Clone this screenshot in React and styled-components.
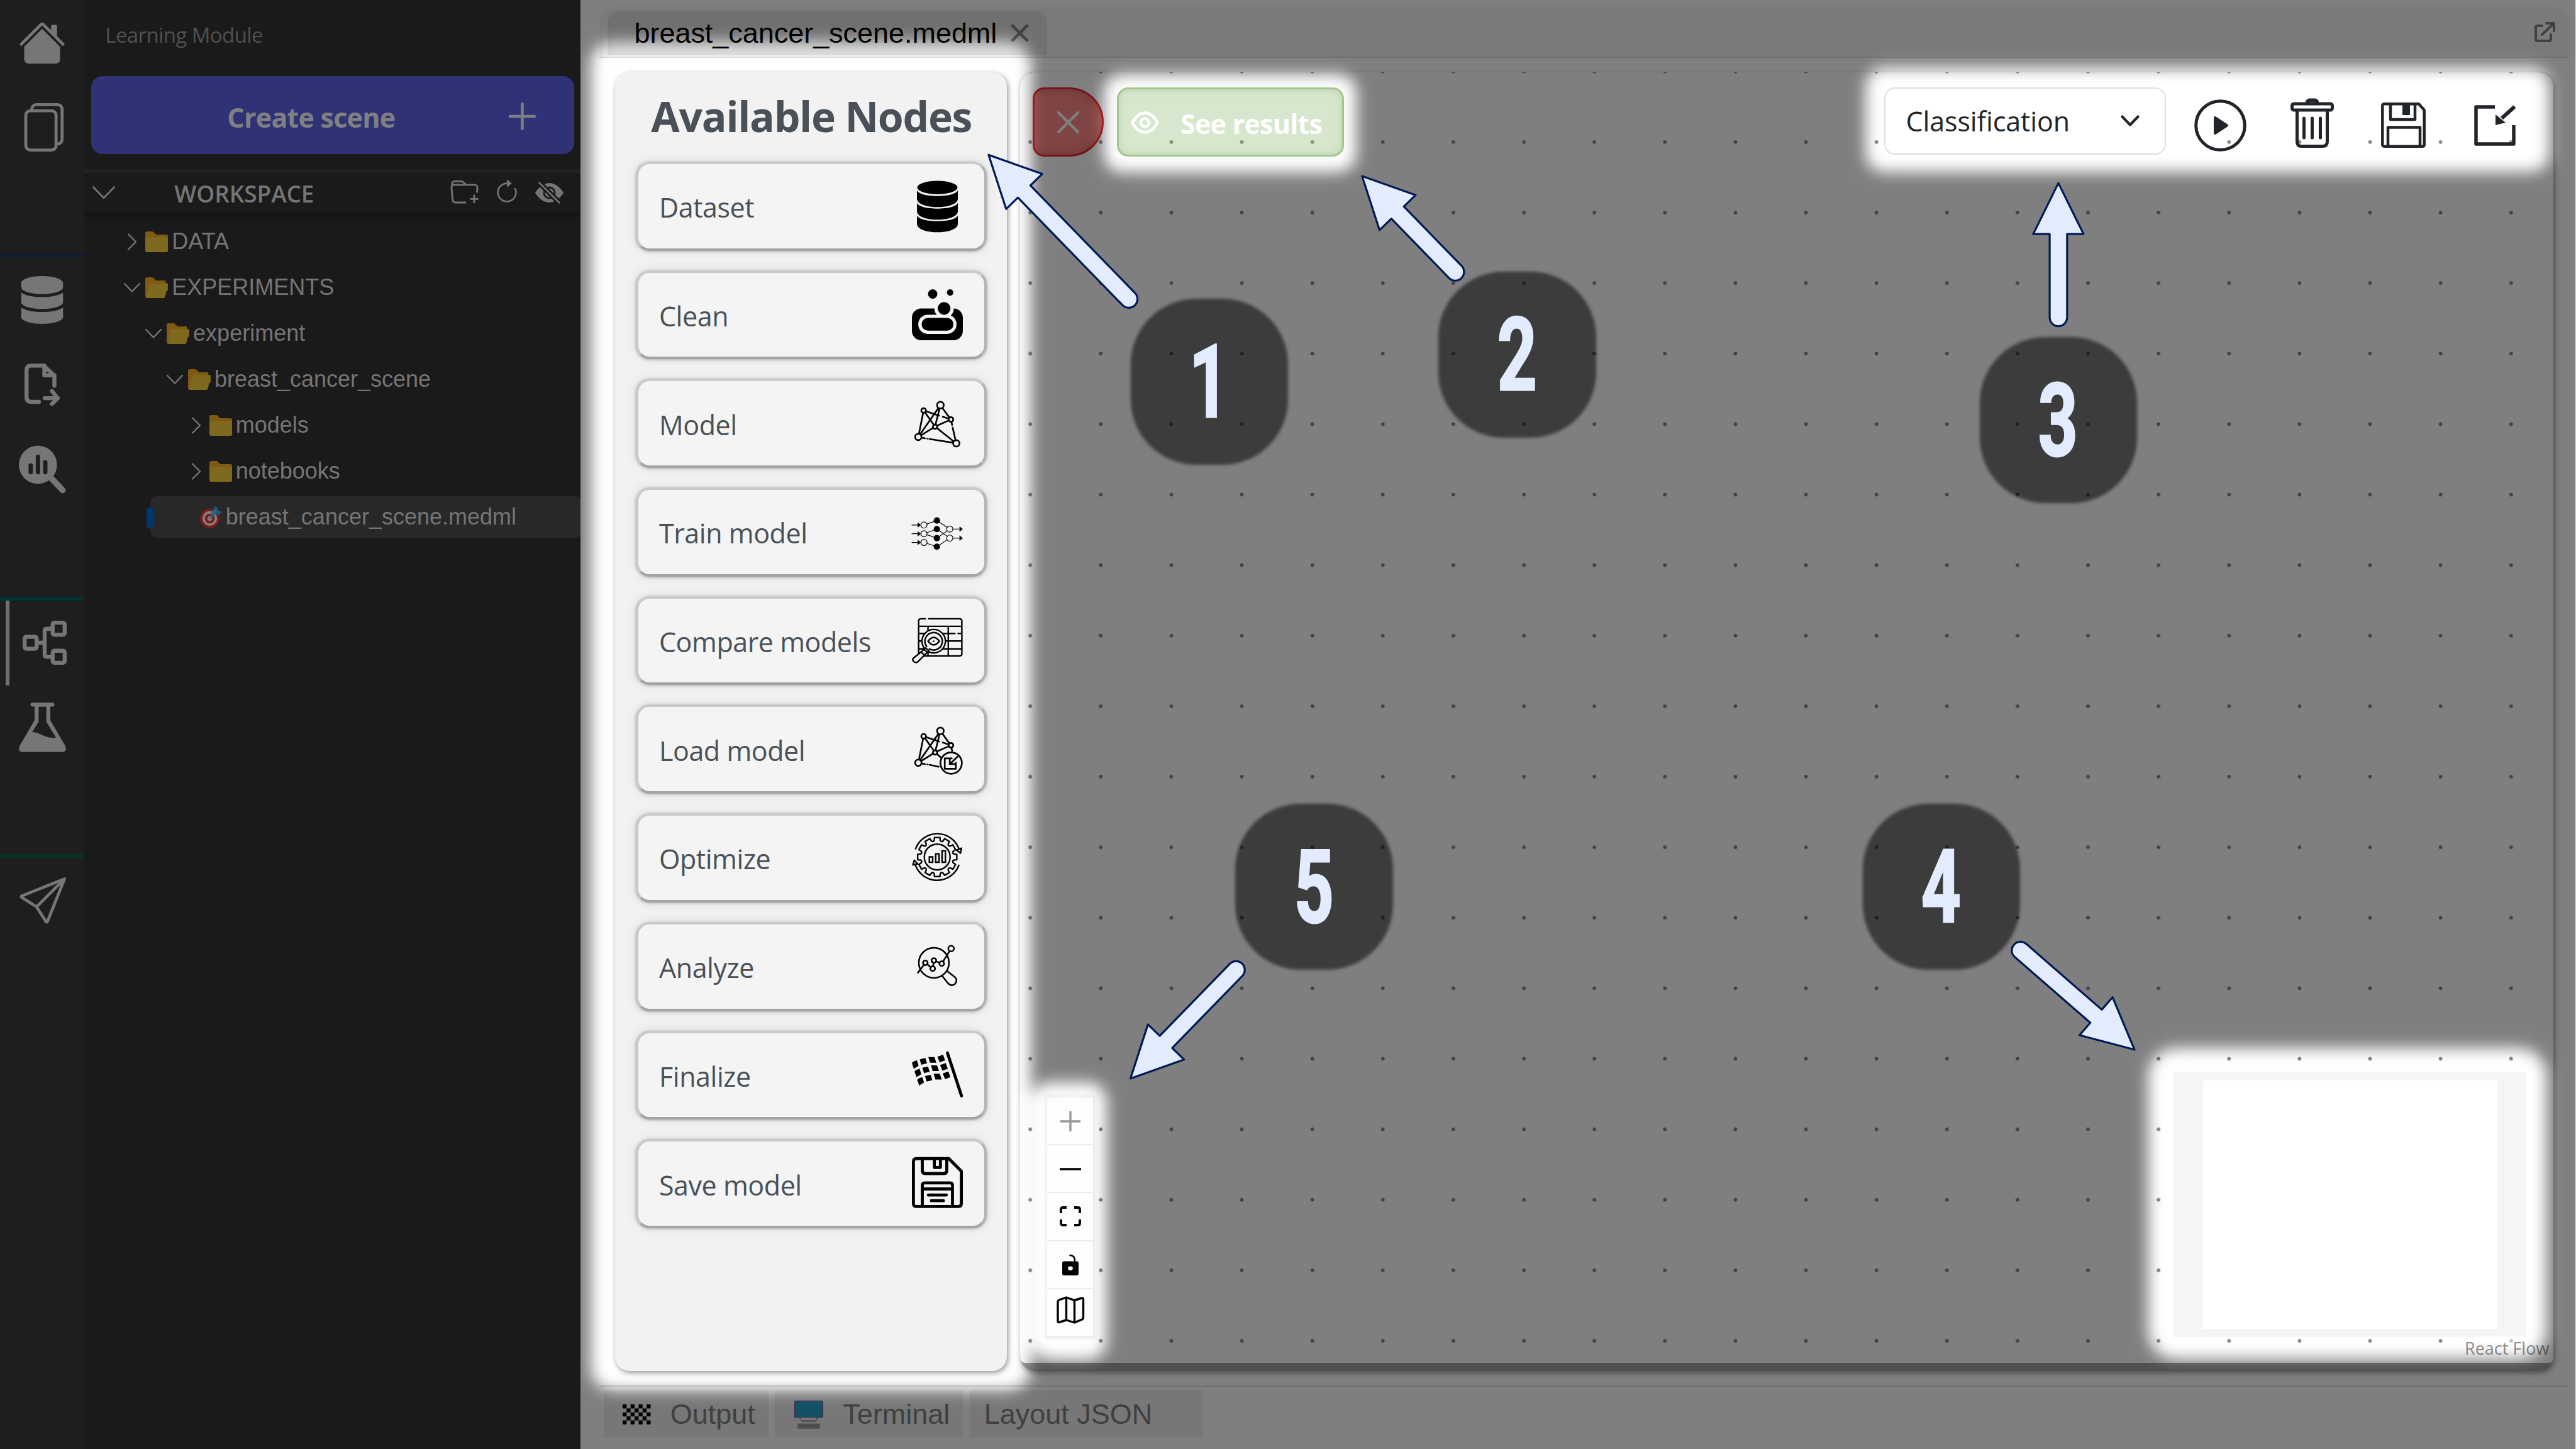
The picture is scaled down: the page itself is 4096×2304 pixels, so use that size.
import React from "react";
import styled, { createGlobalStyle, css } from "styled-components";
import { BsHouseFill, BsFiles, BsFolderPlus, BsArrowClockwise, BsEyeSlashFill, BsSend } from "react-icons/bs";
import { FaDatabase } from "react-icons/fa";

const Global = createGlobalStyle`
  * { box-sizing: border-box; }
  body { margin: 0; background: #fff; overflow: hidden; }
`;

const ui = `"Open Sans", "Noto Sans", sans-serif`;
const arial = `"Liberation Sans", Arial, sans-serif`;

const Window = styled.div`
  position: relative;
  display: flex;
  width: 4096px;
  height: 2304px;
  overflow: hidden;
  font-family: ${ui};
`;

/* ---------- icon rail ---------- */
const Rail = styled.nav`
  width: 134.3px;
  flex: none;
  background: #1e1e1e;
  color: #767676;
  display: flex;
  flex-direction: column;
`;
const RailGroup = styled.div`
  height: ${(p) => p.$h}px;
  border-top: ${(p) => (p.$line ? `6px solid ${p.$line}` : "none")};
  padding-top: 1px;
`;
const RailItem = styled.div`
  height: 134.5px;
  display: flex;
  align-items: center;
  justify-content: center;
  ${(p) =>
    p.$active &&
    css`
      margin-left: 9px;
      margin-top: -1px;
      border-left: 6px solid #6f6f6f;
      padding-right: 8px;
    `}
`;
const Glyph = styled.svg`
  display: block;
  flex: none;
  overflow: visible;
  width: ${(p) => p.$w}px;
  height: ${(p) => p.$h}px;
  fill: none;
  stroke: currentColor;
  stroke-linecap: round;
  stroke-linejoin: round;
`;

/* ---------- sidebar ---------- */
const Sidebar = styled.aside`
  width: 789px;
  flex: none;
  background: #1a1a1a;
  color: #757575;
  display: flex;
  flex-direction: column;
`;
const ModuleTitle = styled.div`
  height: 121px;
  padding: 33px 0 0 33px;
  line-height: 46px;
  font-size: 33px;
  letter-spacing: -0.6px;
  color: #505050;
`;
const CreateButton = styled.div`
  height: 124px;
  margin: 0 10px 24px 11px;
  border-radius: 18px;
  background: #303278;
  color: #808080;
  display: flex;
  align-items: center;
  justify-content: space-between;
  padding: 3px 61px 0 216px;
  font-size: 43px;
  font-weight: 700;
  letter-spacing: -0.75px;
`;
const CreateLabel = styled.span`
  padding-top: 3px;
`;
const WorkspaceHeader = styled.div`
  height: 68px;
  border-top: 6px solid #212121;
  display: flex;
  align-items: center;
  padding: 0 27px 0 13px;
`;
const WorkspaceName = styled.div`
  flex: 1;
  padding: 3px 0 0 94px;
  font-size: 37px;
  font-weight: 600;
  letter-spacing: -0.1px;
`;
const WorkspaceActions = styled.div`
  display: flex;
  align-items: center;
  gap: 24px;
`;
const Tree = styled.div`
  padding-top: 10.5px;
  background: linear-gradient(#151515 0 6px, #1a1a1a 13px);
  flex: 1;
`;
const TreeRow = styled.div`
  position: relative;
  height: ${(p) => (p.$selected ? 66 : 73)}px;
  margin: ${(p) => (p.$selected ? "3px -2px 0 105px" : "0")};
  padding-left: ${(p) => (p.$selected ? 78.5 : 60 + p.$level * 33.8)}px;
  border-radius: 10px;
  background: ${(p) => (p.$selected ? "#282828" : "transparent")};
  display: flex;
  align-items: center;
  font: 36px ${arial};
`;
const ChevronSlot = styled.span`
  width: 37px;
  display: flex;
  padding-left: ${(p) => (p.$open ? 3 : 9)}px;
`;
const TreeLabel = styled.span`
  margin-left: ${(p) => p.$gap}px;
  white-space: nowrap;
`;
const SelectedMark = styled.span`
  position: absolute;
  left: -6px;
  top: 17px;
  width: 11px;
  height: 34px;
  border-radius: 6px;
  background: #00376f;
`;

/* ---------- main column ---------- */
const Main = styled.main`
  position: relative;
  flex: 1;
  background: #fff;
  display: flex;
  flex-direction: column;
`;
const TabStrip = styled.header`
  flex: none;
  height: 81px;
  margin: 10.5px 11px 0 29.7px;
  border-radius: 22px 22px 0 0;
  background: #f5f5f5;
  border-bottom: 2px solid #dedede;
  display: flex;
  align-items: flex-start;
  justify-content: space-between;
  padding: 6.5px 22px 0 13px;
`;
const Tab = styled.div`
  width: 699px;
  height: 70.5px;
  border-radius: 20px 20px 0 0;
  background: #e0e0e0;
  display: flex;
  align-items: center;
  justify-content: space-between;
  padding: 1px 29px 0 42.5px;
  font: 45px ${arial};
  letter-spacing: -0.04px;
  color: #000;
`;
const TabAction = styled.span`
  color: #808080;
  margin-top: ${(p) => p.$top || 0}px;
`;
const Workbench = styled.section`
  flex: none;
  height: 2088px;
  display: flex;
  gap: 21.5px;
  padding: 23.5px 36px 0 55.2px;
`;
const cardShadow = `2px 3px 9px rgba(0,0,0,.42)`;
const NodePanel = styled.div`
  width: 622.5px;
  height: 2064.5px;
  flex: none;
  border-radius: 23px;
  background: #f2f2f2;
  box-shadow: ${cardShadow};
  padding: 0 32px 0 33px;
`;
const PanelTitle = styled.h1`
  margin: 0;
  height: 142px;
  padding-top: 24px;
  text-align: center;
  line-height: 90px;
  font-size: 66px;
  font-weight: 700;
  letter-spacing: -1.3px;
  color: #495057;
  white-space: nowrap;
`;
const NodeList = styled.div`
  display: flex;
  flex-direction: column;
  gap: 31px;
`;
const NodeCard = styled.div`
  height: 141.7px;
  border: 4px solid #c6c6c6;
  border-color: #cacaca #b4b4b4 #a4a4a4 #c8c8c8;
  border-radius: 22px;
  background: #f4f4f4;
  background-clip: padding-box;
  box-shadow: 0 1px 4px rgba(0,0,0,.25), 0 0 16px 2px rgba(0,0,0,.08);
  display: flex;
  align-items: center;
  justify-content: space-between;
  padding: 0 33.500px 0 32.500px;
  font-size: 43px;
  letter-spacing: -0.45px;
  color: #495057;
`;
const NodeLabel = styled.span`
  padding-top: 4px;
  white-space: nowrap;
`;

/* ---------- flow canvas ---------- */
const CanvasCard = styled.div`
  flex: 1;
  height: 2064.5px;
  border-radius: 23px;
  overflow: hidden;
  background: #a0a0a0;
`;
const CanvasShadow = styled.div`
  flex: 1;
  display: flex;
  height: 2064.5px;
  border-radius: 23px;
  box-shadow: ${cardShadow};
`;
const FlowPane = styled.div`
  height: 2051.5px;
  border-radius: 0 0 8px 8px;
  background-color: #fff;
  background-image: radial-gradient(circle, #85858e 2.6px, rgba(133,133,142,0) 3.3px);
  background-size: 112.13px 112.13px;
  background-position: -39.9px -57.3px;
  display: flex;
  flex-direction: column;
  justify-content: space-between;
`;
const FlowTop = styled.div`
  display: flex;
  align-items: flex-start;
  padding: 23.5px 51px 0 19.5px;
`;
const FlowBottom = styled.div`
  position: relative;
  display: flex;
  align-items: flex-end;
  justify-content: space-between;
  padding: 0 43px 41px 43px;
`;
const CloseButton = styled.div`
  width: 113px;
  height: 110.5px;
  border: 3px solid #e22630;
  border-radius: 18px 56px 56px 18px;
  background: #ff8a8a;
  box-shadow: inset 0 0 18px rgba(120,40,40,.35);
  color: #fff;
  display: flex;
  align-items: center;
  padding: 2px 0 0 36px;
`;
const ResultsButton = styled.div`
  margin-left: 21px;
  width: 361px;
  height: 110.5px;
  border: 3px solid #a4c990;
  border-radius: 18px;
  background: rgba(112,169,80,.28);
  box-shadow: inset 0 0 14px rgba(90,140,60,.2);
  color: #fff;
  display: flex;
  align-items: center;
  gap: 34px;
  padding: 3px 0 0 19px;
  font-size: 43px;
  font-weight: 700;
  letter-spacing: -0.75px;
  white-space: nowrap;
`;
const ResultsLabel = styled.span`
  padding-top: 3px;
`;
const Tools = styled.div`
  margin-left: auto;
  display: flex;
  align-items: center;
  color: #212529;
`;
const TypeSelect = styled.div`
  width: 448px;
  height: 107px;
  border: 2.4px solid #dcdee4;
  border-radius: 17px;
  background: #fff;
  margin-right: 45px;
  display: flex;
  align-items: center;
  justify-content: space-between;
  padding: 0 40px 0 33px;
  font-size: 43px;
  letter-spacing: -0.1px;
`;
const ToolButton = styled.div`
  width: 84px;
  height: 84px;
  margin-left: ${(p) => p.$gap ?? 61.5}px;
  display: flex;
  align-items: center;
  justify-content: center;
  padding-top: ${(p) => p.$down || 0}px;
`;
const Controls = styled.div`
  width: 73px;
  box-shadow: 0 0 5px 3px rgba(0,0,0,.07);
  background: #fefefe;
`;
const ControlCell = styled.div`
  height: ${(p) => p.$h || 76}px;
  border-bottom: 2px solid #ececec;
  display: flex;
  align-items: center;
  justify-content: center;
  padding-top: ${(p) => p.$down || 0}px;
  padding-bottom: ${(p) => p.$up || 0}px;
  color: ${(p) => (p.$muted ? "#979797" : "#000")};
`;
const MiniMap = styled.div`
  width: 561px;
  height: 421px;
  background: #f5f5f5;
  padding: 13px 46.5px;
  display: flex;
`;
const MiniView = styled.div`
  flex: 1;
  background: #fff;
`;
const Attribution = styled.div`
  position: absolute;
  right: 0;
  bottom: 0;
  width: 145px;
  height: 43px;
  background: rgba(255,255,255,.5);
  font-size: 27px;
  line-height: 40px;
  padding: 0 0 0 4px;
  color: #8f8f8f;
  white-space: nowrap;
`;

/* ---------- bottom strip ---------- */
const BottomBar = styled.footer`
  flex: 1;
  margin: 23px 11px 0 29.7px;
  border-top: 2px solid #dedede;
  display: flex;
  align-items: flex-start;
  gap: 10.5px;
  padding: 6.5px 0 0 6.7px;
`;
const BottomTab = styled.div`
  width: ${(p) => p.$w}px;
  height: 75px;
  background: #efefef;
  display: flex;
  align-items: center;
  padding: 1px 0 0 ${(p) => p.$pad}px;
  gap: 31px;
  font: 45px ${arial};
  color: #808080;
  white-space: nowrap;
`;

/* ---------- guide layer ---------- */
const Dimmer = styled.svg`
  position: absolute;
  inset: 0;
  width: 100%;
  height: 100%;
`;
const Guides = styled.div`
  position: absolute;
  inset: 0;
`;
const Arrows = styled.svg`
  position: absolute;
  inset: 0;
  width: 4096px;
  height: 2304px;
`;
const Badge = styled.div`
  position: absolute;
  left: ${(p) => p.$x}px;
  top: ${(p) => p.$y}px;
  width: 250.5px;
  height: 264px;
  display: flex;
  align-items: center;
  justify-content: center;
  &::before {
    content: "";
    position: absolute;
    inset: 0;
    border-radius: 104px;
    background: rgba(0,0,0,.53);
    filter: blur(2.5px);
  }
`;
const BadgeNumber = styled.span`
  position: relative;
  font: 700 162px/1 Roboto, sans-serif;
  color: #e3ecff;
  -webkit-text-stroke: 3px #e3ecff;
  transform: translateY(1px) scaleX(0.68);
`;

/* ---------- drawings ---------- */
const Chevron = ({ open, w = 26, sw = 2.4 }) =>
  open ? (
    <Glyph $w={w} $h={w * 0.56} viewBox="0 0 26 14.5"><path d="M1 1 13 13.5 25 1" strokeWidth={sw} /></Glyph>
  ) : (
    <Glyph $w={14} $h={25} viewBox="0 0 14 25"><path d="M1 .5 13 12.5 1 24.5" strokeWidth={sw} /></Glyph>
  );
const Folder = ({ open }) => (
  <Glyph $w={36} $h={33} viewBox="0 0 67 61" stroke="none">
    <path stroke="none" fill="#805914" d="M0 5Q0 0 5 0H20Q24 0 27 4L32 9H62Q67 9 67 14V40H0Z" />
    {open ? (
      <g>
        <path stroke="none" fill="#1a1a1a" d="M60 8H68V18H60Z" />
        <path stroke="none" fill="#805914" d="M0 14H60V50L5 61Q0 60 0 54Z" />
        <path stroke="none" fill="#7e6a1f" d="M12 22Q13 17 18 17H63Q68 17 67 22L59 56Q58 61 53 61H7Q1 60 3 55Z" />
      </g>
    ) : (
      <path stroke="none" fill="#7e6a1f" d="M0 20Q0 17 4 17H63Q67 17 67 20V56Q67 61 62 61H5Q0 61 0 56Z" />
    )}
  </Glyph>
);
const Target = () => (
  <Glyph $w={36} $h={36} viewBox="0 0 67 67">
    <g stroke="none">
      <circle cx="29" cy="38" r="28.5" fill="#7c1a1a" />
      <circle cx="29" cy="38" r="21.5" fill="#7f7f7f" />
      <circle cx="29" cy="38" r="14.5" fill="#7c1a1a" />
      <circle cx="29" cy="38" r="7" fill="#7f7f7f" />
      <path d="M31 31 36 16 46 0 52 9 53 13 66 19 56 27 44 27 33 37Z" fill="#27527c" />
      <path d="M29 37 40 17 48 12 51 18 44 27Z" fill="#1e7a80" />
    </g>
    <path d="M29 38 52 14" stroke="#31556e" strokeWidth="2.5" />
  </Glyph>
);
const ExportFile = () => (
  <Glyph $w={56} $h={67} viewBox="0 0 105 125" strokeWidth="12">
    <path d="M43 114H20Q6 114 6 100V20Q6 6 20 6H57L89 36V66M59 6V35H89M60 103H99M82 82 99 103 82 120" />
  </Glyph>
);
const SearchChart = () => (
  <Glyph $w={75} $h={77} viewBox="0 0 141 144">
    <circle cx="57" cy="58" r="57" fill="currentColor" stroke="none" />
    <path d="M98 99 131 134" strokeWidth="18" />
    <path d="M35.500 60V80M57 34V80M79 51V80" stroke="#1e1e1e" strokeWidth="13" />
  </Glyph>
);
const FlowTree = () => (
  <Glyph $w={70} $h={70} viewBox="0 0 132 132" strokeWidth="12">
    <rect x="6" y="48" width="36" height="36" rx="5" />
    <rect x="90" y="6" width="36" height="36" rx="5" />
    <rect x="90" y="90" width="36" height="36" rx="5" />
    <path d="M42 66H66M90 24H72Q66 24 66 30V102Q66 108 72 108H90" />
  </Glyph>
);
const Flask = () => (
  <Glyph $w={75} $h={79} viewBox="0 0 141 148">
    <path stroke="none" fill="currentColor" fillRule="evenodd" d="M47 6V53L3 128Q-5 147 12 148H129Q146 147 138 128L94 53V6ZM59 12V57L40 88C64 88 76 108 111 105L82 57V12Z" />
    <path d="M41 6H100" strokeWidth="12" />
  </Glyph>
);
const Plus = () => (
  <Glyph $w={43} $h={44} viewBox="0 0 43 44"><path d="M21.500 2V42M2 22H41" strokeWidth="4.400" /></Glyph>
);
const Cross = ({ w = 35, sw = 4.4, cap = "round" }) => (
  <Glyph $w={w} $h={w} viewBox="0 0 35 35"><path d="M2 2 33 33M33 2 2 33" strokeWidth={sw} strokeLinecap={cap} /></Glyph>
);
const External = () => (
  <Glyph $w={33} $h={32} viewBox="0 0 33 32" strokeWidth="4">
    <path d="M12 6H5Q2 6 2 9V27Q2 30 5 30H23Q26 30 26 27V20M19 2H31V14M30 3 12 20" />
  </Glyph>
);
const Eye = () => (
  <Glyph $w={45} $h={36} viewBox="0 0 45 36" strokeWidth="4.400">
    <path d="M2.500 18Q11 2.500 22.500 2.500T42.500 18Q34 33.500 22.500 33.500T2.500 18Z" />
    <circle cx="22.500" cy="18" r="6.500" />
  </Glyph>
);

const NodeIcon = styled(Glyph).attrs({ $w: 81, $h: 81, viewBox: "0 0 152 152" })`
  color: #000;
`;
const IconDataset = () => (
  <NodeIcon>
    <g stroke="none" fill="#020003">
      <ellipse cx="76" cy="21" rx="60" ry="20" />
      {[0, 37.5, 75].map((y) => (
        <path key={y} transform={`translate(0 ${y})`} d="M15 29C22 52 130 52 137 29V54C137 88 15 88 15 54Z" />
      ))}
    </g>
  </NodeIcon>
);
const IconClean = () => (
  <NodeIcon>
    <g stroke="none" fill="#000">
      <rect x="0" y="57" width="152" height="95" rx="28" />
      <circle cx="96" cy="57" r="29" fill="#f4f4f4" />
      <rect x="19" y="76" width="114" height="57" rx="28" fill="#f4f4f4" />
      <rect x="29" y="85.500" width="95" height="38" rx="19" />
      <circle cx="96" cy="57" r="19" />
      <circle cx="62" cy="14" r="14" />
      <circle cx="114" cy="9.500" r="9.500" />
    </g>
  </NodeIcon>
);
const Net = ({ load }) => (
  <NodeIcon strokeWidth="5">
    <path strokeLinecap="butt" d="M35 37 19 116M35 37 69 85M35 37 83 53M90 55 116 64M85 21 19 116M85 21 69 85M85 21 116 64M69 85 116 64M69 85 19 116" />
    <path d={load ? "M69 85 85 99M118 72 120 80M29 118 39 120M46 121 46.500 121M52 122 80 128" : "M69 85 132 135M118 72 120 80M121.500 88 130 125M29 118 39 120M46 121 46.500 121M52 122 122 133"} />
    <g fill="#f4f4f4">
      <circle cx="35" cy="37" r="7" />
      <circle cx="85" cy="21" r="10" />
      <circle cx="116.500" cy="64" r="7" />
      <circle cx="69" cy="85.500" r="6.500" />
      <circle cx="19" cy="116" r="9.500" />
      {!load && <circle cx="132.500" cy="135" r="9.500" />}
      {load && <circle cx="117" cy="117" r="32" />}
    </g>
    {load && <path d="M119 103H98V134H131V116M136 98 114 119M113 105V120H127" />}
  </NodeIcon>
);
const IconTrain = () => (
  <NodeIcon strokeWidth="2.200">
    <path d="M36 56 74.500 42.500 113 68M36 82 74.500 68 113 95M36 82 74.500 95 113 68M36 108 74.500 120.500 113 95M0 56H20M0 82H20M0 108H20M122 68H145M122 95H145" />
    <g fill="#f4f4f4">
      {[56, 82, 108].map((y) => <circle key={y} cx="36" cy={y} r="9.200" />)}
      {[68, 95].map((y) => <circle key={y} cx="113" cy={y} r="9.200" />)}
    </g>
    <g fill="#000" stroke="none">
      {[42.5, 68, 95, 120.5].map((y) => <circle key={y} cx="74.500" cy={y} r="9.500" />)}
      {[56, 82, 108].map((y) => <path key={y} d={`M17 ${y - 8} 27 ${y} 17 ${y + 8}Z`} />)}
      {[68, 95].map((y) => <path key={y} d={`M142 ${y - 8} 152 ${y} 142 ${y + 8}Z`} />)}
    </g>
  </NodeIcon>
);
const IconCompare = () => (
  <NodeIcon strokeWidth="4.500">
    <path d="M40 11H27Q20 11 20 18V122M50 11H142Q149 11 149 18V116Q149 122 142 122H20M20 33.500H149M48 33.500V122M108.500 33.500V122M20 55H128M138 55H149M20 77.500H149M20 101H149" />
    <circle cx="65" cy="78" r="35" fill="#f4f4f4" />
    <path d="M44 94A26 26 0 1 1 52 101M48 78Q65 55 82 78Q65 100 48 78Z" />
    <circle cx="65" cy="78" r="2.500" fill="#000" stroke="none" />
    <path fill="#f4f4f4" d="M36 103 46 111 17 140Q12 144 6 139Q0 133 4 129Z M36 103 40 98 51 107 46 111" />
    <path d="M27 110 37 119" />
  </NodeIcon>
);
const gear = (() => {
  const pts = [];
  for (let i = 0; i < 12; i++) {
    const at = (r, a) => {
      const t = ((i * 30 + a) * Math.PI) / 180;
      return `${(75.5 + r * Math.cos(t)).toFixed(1)} ${(74.5 + r * Math.sin(t)).toFixed(1)}`;
    };
    pts.push(`${i ? "L" : "M"}${at(59, -8)}L${at(59, 8)}L${at(51, 10)}Q${at(45, 15)} ${at(51, 20)}`);
  }
  return pts.join("") + "Z";
})();
const IconOptimize = () => (
  <NodeIcon strokeWidth="4.500">
    <path d={gear} />
    <circle cx="75.500" cy="74.500" r="38.500" />
    <path d="M11 50A69 69 0 0 1 140 49M140 99A69 69 0 0 1 11 100" />
    <path fill="#f4f4f4" d="M133 54 148 48 145 63ZM3 98 7 84 17 95Z" />
    <path strokeLinejoin="miter" d="M52 74H62V90H52ZM71 65H81V90H71ZM90 56H100V90H90Z" />
  </NodeIcon>
);
const IconAnalyze = () => (
  <NodeIcon strokeWidth="4.800">
    <circle cx="65.600" cy="65.600" r="45" />
    <path d="M90 104 108 127Q117 137 128 129Q138 118 129 109L105 90" />
    <path d="M18 95 40 65.600 62 83 65.600 58.500 89 68 117 23" />
    <g fill="#f4f4f4">
      <circle cx="40" cy="65.600" r="7" /><circle cx="62" cy="83" r="7" /><circle cx="65.600" cy="58.500" r="7" /><circle cx="89" cy="68" r="7" /><circle cx="117" cy="23" r="8.500" />
    </g>
  </NodeIcon>
);
const IconFinalize = () => (
  <NodeIcon>
    <path d="M106 10 148 138" strokeWidth="9" />
    <g stroke="none" fill="#000">
      {[0, 1, 2].map((r) => (
        <g key={r} transform={`translate(${r * 8} ${r * 25})`}>
          <path d="M0 41Q0 36 15 32L20 48 6 57Z" />
          <path d="M23 29 40 25 45 41 28 45Z" />
          <path d="M49 22 67 22 73 39 54 39Z" />
          <path d="M76 21 93 15 99 32 83 38Z" />
        </g>
      ))}
    </g>
  </NodeIcon>
);
const IconSave = () => (
  <NodeIcon strokeWidth="9">
    <g transform="translate(0 -4)">
      <path d="M14 4.500H110L147.500 42V138Q147.500 147.500 138 147.500H14Q4.500 147.500 4.500 138V14Q4.500 4.500 14 4.500Z" />
      <path d="M31 5V40Q31 49 40 49H95Q104 49 104 40V5M67 5V31H85V5M31 147V84Q31 77 38 77H114Q121 77 121 84V147M33 95H119M49 113H103M58 130H94" />
    </g>
  </NodeIcon>
);

const PlayIcon = () => (
  <Glyph $w={83} $h={83} viewBox="0 0 83 83">
    <circle cx="41.500" cy="41.500" r="38.800" strokeWidth="5" />
    <path d="M33 29 52 41.500 33 54Z" fill="currentColor" strokeWidth="4" />
  </Glyph>
);
const TrashIcon = () => (
  <Glyph $w={69} $h={78} viewBox="0 0 69 78" strokeWidth="5">
    <path d="M27 5Q28 2.500 31 2.500H38Q41 2.500 42 5" strokeWidth="6" />
    <rect x="2.500" y="8" width="64" height="10" rx="3" />
    <path d="M10.500 20V68Q10.500 75.500 17 75.500H51Q58.500 75.500 58.500 68V20M21.500 31V62M34.500 31V62M47.500 31V62" />
  </Glyph>
);
const SaveIcon = () => (
  <Glyph $w={71} $h={72} viewBox="0 0 71 72" strokeWidth="4.500">
    <path d="M5 2.300H60L68.700 12V67Q68.700 69.700 66 69.700H5Q2.300 69.700 2.300 67V5Q2.300 2.300 5 2.300Z" />
    <path strokeLinecap="butt" d="M15 2V27H54V2M11 70V39.500H62V70" />
    <path d="M34 3H46V20H34Z" fill="currentColor" stroke="none" />
  </Glyph>
);
const LoadIcon = () => (
  <Glyph $w={66} $h={65} viewBox="0 0 66 65" strokeWidth="5.500">
    <path strokeLinecap="butt" d="M33 3H3V62H63V32" />
    <path strokeLinecap="butt" d="M64.500 2.500 44 21" strokeWidth="6" />
    <path d="M34 15 50 28 34 32Z" fill="currentColor" stroke="none" />
  </Glyph>
);
const ZoomIn = () => <Glyph $w={34} $h={34} viewBox="0 0 34 34"><path d="M17 1V33M1 17H33" strokeWidth="3.400" strokeLinecap="butt" /></Glyph>;
const ZoomOut = () => <Glyph $w={34} $h={4} viewBox="0 0 34 4"><path d="M0 2H34" strokeWidth="3.600" strokeLinecap="butt" /></Glyph>;
const FitView = () => (
  <Glyph $w={34} $h={32} viewBox="0 0 34 32" strokeWidth="3.800">
    <path strokeLinecap="butt" d="M11 2H5Q2 2 2 5V11M23 2H29Q32 2 32 5V11M11 30H5Q2 30 2 27V21M23 30H29Q32 30 32 27V21" />
  </Glyph>
);
const Unlock = () => (
  <Glyph $w={26} $h={34} viewBox="0 0 26 34">
    <path d="M12.500 2Q20 2 20 11" strokeWidth="2.600" />
    <path fill="currentColor" fillRule="evenodd" stroke="none" d="M3 11.500H23Q26 11.500 26 14.500V31Q26 34 23 34H3Q0 34 0 31V14.500Q0 11.500 3 11.500ZM13 19.500A3.300 3.300 0 1 0 13 26 3.300 3.300 0 1 0 13 19.500Z" />
  </Glyph>
);
const MapIcon = () => (
  <Glyph $w={44} $h={44} viewBox="0 0 44 44" strokeWidth="3.400">
    <path d="M2 9Q2 7 4 6L15.500 2 28.500 6.500 40 3Q42.500 2.500 42.500 5V34Q42.500 36 40.500 37L28.500 42 15.500 38 4 41.500Q2 42 2 39.500ZM15.500 2V38M28.500 6.500V42" />
  </Glyph>
);
const Checker = () => (
  <Glyph $w={44.5} $h={32} viewBox="0 0 7 5">
    <g stroke="none" fill="#000">
      {Array.from({ length: 35 }, (_, i) => [i % 7, Math.floor(i / 7)])
        .filter(([x, y]) => (x + y) % 2 === 0)
        .map(([x, y]) => <rect key={`${x}-${y}`} x={x} y={y} width="1" height="1" />)}
    </g>
  </Glyph>
);
const Monitor = () => (
  <Glyph $w={46} $h={45} viewBox="0 0 46 45">
    <g stroke="none">
      <rect width="46" height="27.500" rx="2" fill="#75649f" />
      <rect x="2" y="1.500" width="42" height="24.500" fill="#28a0cc" />
      <path d="M8.500 27H37.500V30L34 34H12L8.500 30Z" fill="#a5a5a5" />
      <path d="M11 27.500H35V31H11Z" fill="#efefef" />
      <path d="M12 32H34V34.500H12Z" fill="#b8b8b8" />
      <rect x="5" y="36.500" width="36" height="8.500" rx="1" fill="#a8a8a8" />
      <path d="M7 38H39V39.500H7ZM7 40.300H39V41.800H7Z" fill="#8c8c8c" />
    </g>
  </Glyph>
);

/* ---------- data ---------- */
const tree = [
  { name: "DATA", level: 0 },
  { name: "EXPERIMENTS", level: 0, open: true },
  { name: "experiment", level: 1, open: true },
  { name: "breast_cancer_scene", level: 2, open: true },
  { name: "models", level: 3 },
  { name: "notebooks", level: 3 },
];
const nodes = [
  ["Dataset", <IconDataset />],
  ["Clean", <IconClean />],
  ["Model", <Net />],
  ["Train model", <IconTrain />],
  ["Compare models", <IconCompare />],
  ["Load model", <Net load />],
  ["Optimize", <IconOptimize />],
  ["Analyze", <IconAnalyze />],
  ["Finalize", <IconFinalize />],
  ["Save model", <IconSave />],
];
/* tip x, tip y, centre of the round end x, y — in guide units */
const arrows = [
  [2949, 462, 3367, 892],
  [4063, 525, 4341, 811],
  [6140, 546, 6140, 947],
  [6367, 3131, 6027, 2835],
  [3372, 3217, 3687, 2893],
];
const badges = [
  ["1", 1797.5, 474.5],
  ["2", 2287, 431.5],
  ["3", 3147.5, 536],
  ["4", 2961.5, 1278],
  ["5", 1964, 1278],
];
/* lit windows in the dimmed area: x, y, right, bottom, radius */
const lit = [
  [1762, 124, 3076, 4148, 70],
  [3292, 221, 4047, 514, 56],
  [5565, 202, 7606, 513, 56],
  [6408, 3126, 7597, 4054, 84],
  [3078, 3228, 3302, 4056, 56],
];

const Arrow = ({ a: [x1, y1, x2, y2] }) => {
  const len = Math.hypot(x2 - x1, y2 - y1);
  const ang = (Math.atan2(y2 - y1, x2 - x1) * 180) / Math.PI;
  return (
    <path
      transform={`translate(${x1} ${y1}) rotate(${ang})`}
      d={`M0 0 152 -75V-26H${len}A26 26 0 0 1 ${len} 26H152V75Z`}
      fill="#e3ecff" stroke="#001a57" strokeWidth="6" strokeLinejoin="round"
    />
  );
};

export default function App() {
  return (
    <Window>
      <Global />
      <Rail>
        <RailGroup $h={403}>
          <RailItem><BsHouseFill size={76} /></RailItem>
          <RailItem><BsFiles size={77} /></RailItem>
        </RailGroup>
        <RailGroup $h={546} $line="#0f1a33">
          <RailItem><FaDatabase size={76} /></RailItem>
          <RailItem><ExportFile /></RailItem>
          <RailItem><SearchChart /></RailItem>
        </RailGroup>
        <RailGroup $h={409} $line="#003333">
          <RailItem $active><FlowTree /></RailItem>
          <RailItem><Flask /></RailItem>
        </RailGroup>
        <RailGroup $h={400} $line="#073322">
          <RailItem><BsSend size={75} /></RailItem>
        </RailGroup>
      </Rail>

      <Sidebar>
        <ModuleTitle>Learning Module</ModuleTitle>
        <CreateButton><CreateLabel>Create scene</CreateLabel><Plus /></CreateButton>
        <WorkspaceHeader>
          <Chevron open w={36} sw={2} />
          <WorkspaceName>WORKSPACE</WorkspaceName>
          <WorkspaceActions>
            <BsFolderPlus size={45} />
            <BsArrowClockwise size={42} />
            <BsEyeSlashFill size={45} />
          </WorkspaceActions>
        </WorkspaceHeader>
        <Tree>
          {tree.map((t) => (
            <TreeRow key={t.name} $level={t.level}>
              <ChevronSlot $open={t.open}><Chevron open={t.open} /></ChevronSlot>
              <Folder open={t.open} />
              <TreeLabel $gap={6}>{t.name}</TreeLabel>
            </TreeRow>
          ))}
          <TreeRow $selected>
            <SelectedMark />
            <Target />
            <TreeLabel $gap={5}>breast_cancer_scene.medml</TreeLabel>
          </TreeRow>
        </Tree>
      </Sidebar>

      <Main>
        <TabStrip>
          <Tab>
            breast_cancer_scene.medml
            <TabAction><Cross w={29} sw={5.5} cap="butt" /></TabAction>
          </Tab>
          <TabAction $top={18}><External /></TabAction>
        </TabStrip>

        <Workbench>
          <NodePanel>
            <PanelTitle>Available Nodes</PanelTitle>
            <NodeList>
              {nodes.map(([name, icon]) => (
                <NodeCard key={name}><NodeLabel>{name}</NodeLabel>{icon}</NodeCard>
              ))}
            </NodeList>
          </NodePanel>

          <CanvasShadow>
            <CanvasCard>
              <FlowPane>
                <FlowTop>
                  <CloseButton><Cross /></CloseButton>
                  <ResultsButton><Eye /><ResultsLabel>See results</ResultsLabel></ResultsButton>
                  <Tools>
                    <TypeSelect>
                      Classification
                      <Glyph $w={30} $h={18} viewBox="0 0 30 18"><path d="M2.500 2.500 15 15.500 27.500 2.500" strokeWidth="4.200" /></Glyph>
                    </TypeSelect>
                    <ToolButton $gap={0} $down={14}><PlayIcon /></ToolButton>
                    <ToolButton $down={8}><TrashIcon /></ToolButton>
                    <ToolButton $down={14}><SaveIcon /></ToolButton>
                    <ToolButton $down={14}><LoadIcon /></ToolButton>
                  </Tools>
                </FlowTop>
                <FlowBottom>
                  <Controls>
                    <ControlCell $muted $down={3}><ZoomIn /></ControlCell>
                    <ControlCell $down={2}><ZoomOut /></ControlCell>
                    <ControlCell $h={77}><FitView /></ControlCell>
                    <ControlCell><Unlock /></ControlCell>
                    <ControlCell $up={8}><MapIcon /></ControlCell>
                  </Controls>
                  <MiniMap><MiniView /></MiniMap>
                  <Attribution>React Flow</Attribution>
                </FlowBottom>
              </FlowPane>
            </CanvasCard>
          </CanvasShadow>
        </Workbench>

        <BottomBar>
          <BottomTab $w={262} $pad={30.5}><Checker />Output</BottomTab>
          <BottomTab $w={299} $pad={31}><Monitor />Terminal</BottomTab>
          <BottomTab $w={371} $pad={23}>Layout JSON</BottomTab>
        </BottomBar>

        <Dimmer viewBox="1732 0 5952 4322" preserveAspectRatio="none">
          <defs>
            <filter id="soft" filterUnits="userSpaceOnUse" x="1600" y="-100" width="6200" height="4500">
              <feGaussianBlur stdDeviation="22" />
            </filter>
            <mask id="windows" maskUnits="userSpaceOnUse" x="1732" y="0" width="5952" height="4322">
              <rect x="1732" y="0" width="5952" height="4322" fill="#fff" />
              <g filter="url(#soft)">
                {lit.map(([x, y, r, b, rad]) => (
                  <rect key={x} x={x} y={y} width={r - x} height={b - y} rx={rad} fill="#000" />
                ))}
              </g>
            </mask>
          </defs>
          <rect x="1732" y="0" width="5952" height="4322" fill="#000" fillOpacity="0.5" mask="url(#windows)" />
        </Dimmer>
      </Main>

      <Guides>
        {badges.map(([n, x, y]) => (
          <Badge key={n} $x={x} $y={y}><BadgeNumber>{n}</BadgeNumber></Badge>
        ))}
        <Arrows viewBox="0 0 7684 4322">
          {arrows.map((a) => <Arrow key={a[0]} a={a} />)}
        </Arrows>
      </Guides>
    </Window>
  );
}
